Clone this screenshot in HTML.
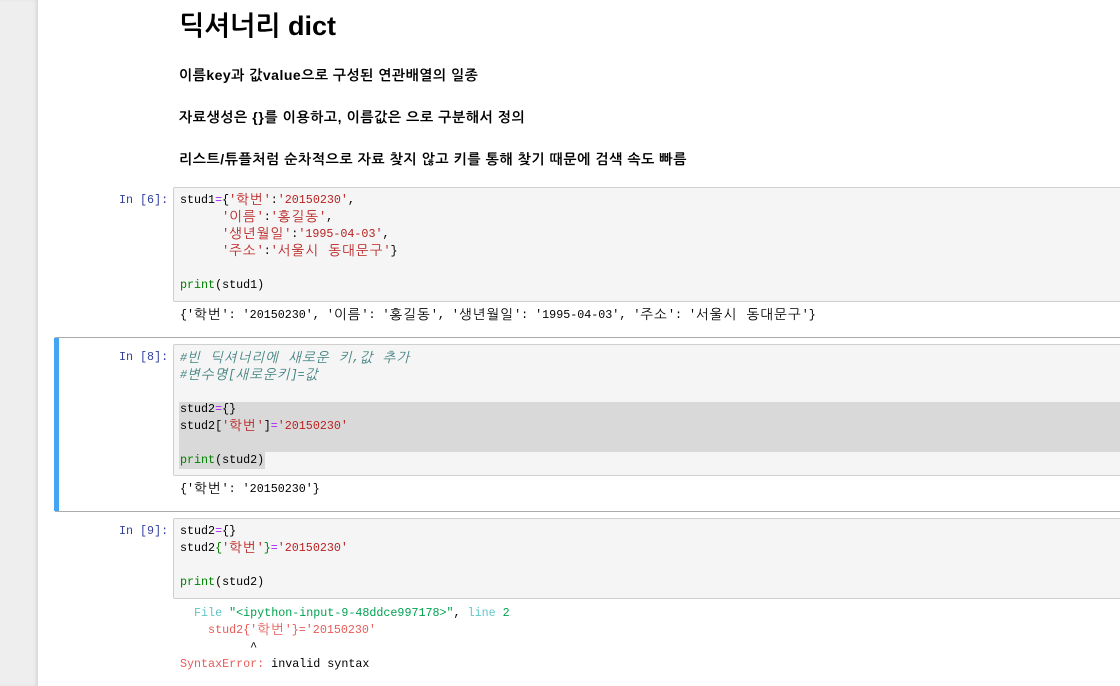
<!DOCTYPE html>
<html><head><meta charset="utf-8"><style>
body{margin:0;width:1120px;height:686px;overflow:hidden;background:#fff;position:relative;font-family:"Liberation Sans","NanumGothic",sans-serif}
.side{position:absolute;left:0;top:0;width:38px;height:686px;background:#eee;box-shadow:inset -3px 0 4px -2px #ccc}
.a{position:absolute;white-space:pre}
.h{font-weight:bold;font-size:14px;color:#000;left:179px;letter-spacing:0.5px}
.code{font-family:"Liberation Mono","NanumGothic",monospace;font-size:11.7px;line-height:17px}
.box{position:absolute;left:173px;width:960px;background:#f5f5f5;border:1px solid #cfcfcf;border-radius:2px}
.p{color:#303f9f;font-family:"Liberation Mono",monospace;font-size:11.7px}
.s{color:#ba2121}.k{color:#008000}.o{color:#aa22ff}.c{color:#408080;font-style:italic}
.sep{position:absolute;left:55px;width:1065px;height:1px;background:#ababab}
i{font-style:inherit;letter-spacing:1.1px;font-size:13.5px;line-height:15px;position:relative;top:1px}
</style></head><body>
<div class="side"></div>
<div class="a" style="left:179px;top:11px;font-size:27px;font-weight:bold">딕셔너리 dict</div>
<div class="a h" style="top:67px">이름key과 값value으로 구성된 연관배열의 일종</div>
<div class="a h" style="top:109px;letter-spacing:0.6px">자료생성은 {}를 이용하고, 이름값은 으로 구분해서 정의</div>
<div class="a h" style="top:151px;letter-spacing:0.6px">리스트/튜플처럼 순차적으로 자료 찾지 않고 키를 통해 찾기 때문에 검색 속도 빠름</div>

<div class="a p" style="left:119px;top:193px">In [6]:</div>
<div class="box" style="top:187px;height:113px"></div>
<div class="a code" style="left:180px;top:192px">stud1<span class="o">=</span>{<span class="s">'<i>학번</i>'</span>:<span class="s">'20150230'</span>,
      <span class="s">'<i>이름</i>'</span>:<span class="s">'<i>홍길동</i>'</span>,
      <span class="s">'<i>생년월일</i>'</span>:<span class="s">'1995-04-03'</span>,
      <span class="s">'<i>주소</i>'</span>:<span class="s">'<i>서울시 동대문구</i>'</span>}

<span class="k">print</span>(stud1)</div>
<div class="a code" style="left:180px;top:307px">{'<i>학번</i>': '20150230', '<i>이름</i>': '<i>홍길동</i>', '<i>생년월일</i>': '1995-04-03', '<i>주소</i>': '<i>서울시 동대문구</i>'}</div>

<div class="sep" style="top:337px"></div>
<div style="position:absolute;left:54px;top:338px;width:5px;height:173px;background:#42a5f5"></div>
<div class="a p" style="left:119px;top:350px">In [8]:</div>
<div class="box" style="top:344px;height:130px"></div>
<div style="position:absolute;left:179px;top:402px;width:941px;height:50px;background:#d9d9d9"></div>
<div style="position:absolute;left:179px;top:452px;width:86px;height:17px;background:#d9d9d9"></div>
<div class="a code" style="left:180px;top:350px"><span class="c">#<i>빈 딕셔너리에 새로운 키</i>,<i>값 추가</i>
#<i>변수명</i>[<i>새로운키</i>]=<i>값</i></span>

stud2<span class="o">=</span>{}
stud2[<span class="s">'<i>학번</i>'</span>]<span class="o">=</span><span class="s">'20150230'</span>

<span class="k">print</span>(stud2)</div>
<div class="a code" style="left:180px;top:481px">{'<i>학번</i>': '20150230'}</div>
<div class="sep" style="top:511px"></div>

<div class="a p" style="left:119px;top:524px">In [9]:</div>
<div class="box" style="top:518px;height:79px"></div>
<div class="a code" style="left:180px;top:523px">stud2<span class="o">=</span>{}
stud2<span class="k">{</span><span class="s">'<i>학번</i>'</span><span class="k">}</span><span class="o">=</span><span class="s">'20150230'</span>

<span class="k">print</span>(stud2)</div>
<div class="a code" style="left:180px;top:605px">  <span style="color:#60c6c8">File</span> <span style="color:#00a250">"&lt;ipython-input-9-48ddce997178&gt;"</span>, <span style="color:#60c6c8">line</span> <span style="color:#00a250">2</span>
<span style="color:#e75c58">    stud2{'<i>학번</i>'}='20150230'</span>
          ^
<span style="color:#e75c58">SyntaxError:</span> invalid syntax</div>
</body></html>
